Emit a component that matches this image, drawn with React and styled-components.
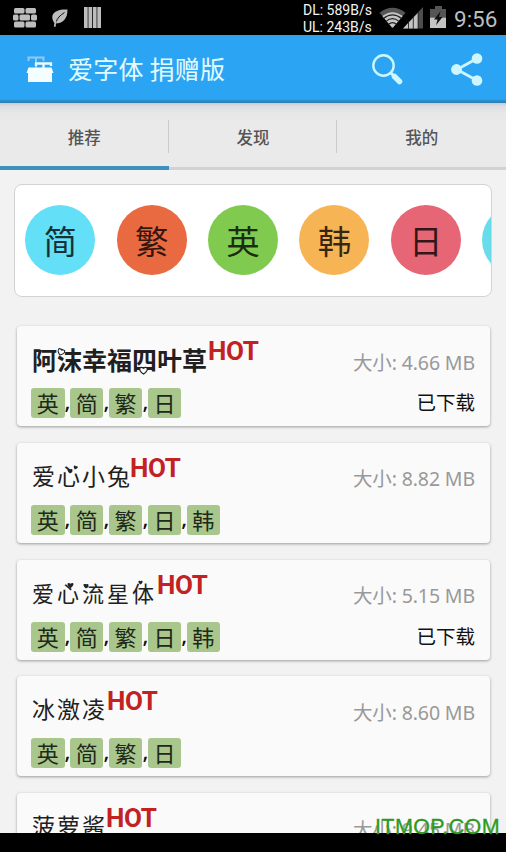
import React from 'react';
import styled, { createGlobalStyle } from 'styled-components';

const GlobalStyle = createGlobalStyle`
  *, *::before, *::after { box-sizing: border-box; }
  body { margin: 0; background: #000; }
`;

const cjk = '"Noto Sans CJK SC", sans-serif';

const Screen = styled.div`
  position: relative;
  width: 506px;
  height: 852px;
  display: flex;
  flex-direction: column;
  overflow: hidden;
  background: #f2f2f2;
  font-family: Roboto, ${cjk};
  white-space: nowrap;
`;

const StatusBar = styled.header`
  flex: none;
  height: 35px;
  display: flex;
  align-items: center;
  justify-content: space-between;
  padding: 0 8px 0 13px;
  background: #000;
  color: #bdbdbd;
`;

const StatusGroup = styled.div`
  display: flex;
  align-items: center;
  height: 35px;
  svg { display: block; }
`;

const NetSpeed = styled.div`
  width: 70px;
  margin-right: 6px;
  font-size: 14px;
  line-height: 17px;
  color: #f4f4f4;
  padding-top: 2px;
`;

const Clock = styled.div`
  width: 44px;
  margin-left: 8px;
  padding-top: 2px;
  font-size: 22.5px;
  line-height: 26px;
`;

const AppBar = styled.div`
  flex: none;
  height: 68px;
  display: flex;
  align-items: center;
  padding: 0 23px 0 26px;
  background: linear-gradient(#3a9de0, #2ba5f3 3px, #2ba5f3 64px, #2b89c4 66px, #2f80b0);
  svg { display: block; flex: none; }
`;

const AppTitle = styled.h1`
  flex: 1;
  margin: -2px 0 0 14px;
  font: 400 25px/34px ${cjk};
  color: #e4fcff;
  letter-spacing: 0.25px;
`;

const Actions = styled.div`
  display: flex;
  align-items: center;
  gap: 48px;
`;

const Tabs = styled.nav`
  flex: none;
  height: 67px;
  display: grid;
  grid-template-columns: repeat(3, 1fr);
  background: linear-gradient(#c5cad3, #dcdee2 3px, #e6e6e7 9px, #eaeaea 18px);
`;

const Tab = styled.div`
  position: relative;
  display: flex;
  justify-content: center;
  align-items: center;
  padding-top: ${p => (p.$active ? '4px' : '3px')};
  border-bottom: ${p => (p.$active ? '4px solid #3f8fbd' : '3px solid #d2d2d2')};
  font: 500 16.5px/24px ${cjk};
  color: #555;
  &:not(:last-child)::after {
    content: '';
    position: absolute;
    right: 0;
    top: 17px;
    width: 1px;
    height: 33px;
    background: #cbcbcb;
  }
`;

const Languages = styled.section`
  flex: none;
  height: 113px;
  margin: 14px 14px 0;
  padding: 0 0 2px 10.3px;
  display: flex;
  align-items: center;
  gap: 21.4px;
  overflow: hidden;
  border: 1px solid #d3d3d3;
  border-radius: 8px;
  background: #fff;
`;

const Bubble = styled.div`
  flex: none;
  width: 70px;
  height: 70px;
  border-radius: 50%;
  display: flex;
  align-items: center;
  justify-content: center;
  background: ${p => p.$color};
  color: rgba(0, 0, 0, 0.78);
  font: 400 33.5px/48px ${cjk};
`;

const FontList = styled.main`
  flex: 1;
  min-height: 0;
  overflow: hidden;
  padding: 29px 16.5px 0 16.5px;
  display: flex;
  flex-direction: column;
  gap: 16.8px;
`;

const Card = styled.article`
  flex: none;
  height: 100px;
  display: flex;
  justify-content: space-between;
  padding: 0 14.5px;
  border-radius: 4px;
  background: #fafafa;
  box-shadow: 0 1px 3px rgba(0, 0, 0, 0.36);
`;

const CardMain = styled.div`
  display: flex;
  flex-direction: column;
`;

const NameRow = styled.div`
  height: 62px;
  display: flex;
  align-items: flex-start;
`;

const FontName = styled.div`
  position: relative;
  width: ${p => p.$width}px;
  margin-top: ${p => p.$top}px;
  padding-left: 1px;
  font: ${p => p.$weight} ${p => p.$size}px/36px ${cjk};
  letter-spacing: ${p => 25 - p.$size}px;
  color: #202020;
`;

const Ornament = styled.svg`
  position: absolute;
  left: ${p => p.$x}px;
  top: ${p => p.$y}px;
  width: ${p => p.$size}px;
  height: ${p => p.$size}px;
  transform: rotate(${p => p.$turn}deg);
`;

const Hot = styled.span`
  margin-top: 10px;
  font: 700 26px/30px Roboto, sans-serif;
  letter-spacing: -0.4px;
  color: #c32222;
`;

const Tags = styled.div`
  display: flex;
  align-items: flex-start;
`;

const Tag = styled.span`
  width: 33.6px;
  height: 30px;
  border-radius: 3px;
  background: #a9c68c;
  color: #20281a;
  font: 400 22px/28px ${cjk};
  text-align: center;
`;

const Comma = styled.span`
  width: 5.3px;
  font: 500 22px/25px "Noto Sans", sans-serif;
  color: #111;
`;

const CardSide = styled.div`
  display: flex;
  flex-direction: column;
  align-items: flex-end;
`;

const Size = styled.div`
  height: 62px;
  padding-top: 22.5px;
  font: 400 19.5px/28px "Noto Sans", ${cjk};
  color: #999;
  letter-spacing: -0.12px;
`;

const Downloaded = styled.div`
  font: 400 19.5px/28px ${cjk};
  color: #111;
`;

const NavBar = styled.footer`
  flex: none;
  height: 19px;
  background: #000;
`;

const Watermark = styled.div`
  position: absolute;
  left: 375px;
  top: 815px;
  font: 400 21.5px/25px "Liberation Sans", sans-serif;
  letter-spacing: 0.4px;
  -webkit-text-stroke: 0.3px #2c9a20;
  color: #2c9a20;
`;

const BrickIcon = () => (
  <svg width="24" height="20" viewBox="0 0 24 20" fill="#bdbdbd">
    <rect x="1" y="0" width="10.5" height="5.5" rx="1.5" /><rect x="12.5" y="0" width="10.5" height="5.5" rx="1.5" />
    <rect x="0" y="6.5" width="5.5" height="6" rx="1.5" /><rect x="6.5" y="6.5" width="10.5" height="6" rx="1.5" /><rect x="18" y="6.5" width="6" height="6" rx="1.5" />
    <rect x="1" y="13.5" width="10.5" height="6" rx="1.5" /><rect x="12.5" y="13.5" width="10.5" height="6" rx="1.5" />
  </svg>
);

const LeafIcon = () => (
  <svg width="16" height="18" viewBox="0 0 16 18">
    <path d="M15.5 .5C9 0 2 1.5 .5 6.5 -.2 9.5 1 12.5 3 14.5 11 14.5 15.5 10 15.5 .5Z" fill="#bdbdbd" />
    <path d="M12.5 3.5C8 6.5 5 9 3.8 14" fill="none" stroke="#111" strokeWidth="1" />
    <path d="M4 12C3.2 14 2.8 15.5 2.8 17.8" fill="none" stroke="#bdbdbd" strokeWidth="1.7" />
  </svg>
);

const BarsIcon = () => (
  <svg width="17" height="21" viewBox="0 0 17 21" fill="#bdbdbd">
    <rect width="3.7" height="21" /><rect x="4.4" width="3.7" height="21" /><rect x="8.9" width="3.7" height="21" /><rect x="13.3" width="3.7" height="21" />
  </svg>
);

const SystemIcons = () => (
  <svg width="67" height="23" viewBox="0 0 67 24" preserveAspectRatio="none" fill="none">
    <path d="M.5 7Q13.5 -3.5 26.5 7L14 22.5H13Z" fill="#555" />
    <path d="M3.3 10.5Q13.5 2.5 23.7 10.5L14 22.5H13Z" fill="#c4c4c4" />
    <path d="M4.5 13Q13.5 5.5 22.5 13M7 16Q13.5 10.5 20 16M9.5 19Q13.5 15.5 17.5 19" stroke="#222" strokeWidth="1.2" />
    <path d="M24 23.5L44 1V23.5Z" fill="#4d4d4d" />
    <path d="M24 23.5L39 7V23.5Z" fill="#c4c4c4" />
    <path d="M29.5 16V24M34.3 11V24M39.1 5V24" stroke="#222" strokeWidth=".9" />
    <path d="M56 0H63V3H67V12H51V3H56Z" fill="#555" />
    <path d="M51 12H67V23H51Z" fill="#c4c4c4" />
    <path d="M61.5 5.5L55 14H58.5L57 20L63.5 11.5H60Z" fill="#111" />
  </svg>
);

const LogoIcon = () => (
  <svg width="28" height="28" viewBox="0 0 28 28" fill="none">
    <path d="M2.5 6V2.5H17.5V6M10 2.5V13" stroke="#8fc9f5" strokeWidth="2" />
    <path d="M10 11V8.5H25V11M17.5 8.5V15" stroke="#e9fbff" strokeWidth="2.3" />
    <path d="M2.5 12.5H25.5L27.5 18H26V27H2V18H.5Z" fill="#f4fdff" />
  </svg>
);

const SearchIcon = () => (
  <svg width="31" height="31" viewBox="0 0 31 31" fill="none" stroke="#cdf6ff">
    <circle cx="11.5" cy="11.5" r="10.2" strokeWidth="2.4" />
    <path d="M18.5 18.5L22 22" strokeWidth="3" />
    <path d="M22.5 22.5L27.5 27.5" strokeWidth="5.5" strokeLinecap="round" />
  </svg>
);

const ShareIcon = () => (
  <svg width="32" height="33" viewBox="0 0 32 33" fill="#cdf6ff">
    <path d="M26 5.5L6 16.5L26 27.5" fill="none" stroke="#cdf6ff" strokeWidth="2.8" />
    <circle cx="5.5" cy="16.5" r="5.4" /><circle cx="26" cy="5.5" r="5.3" /><circle cx="26" cy="27.5" r="5.3" />
  </svg>
);

const Heart = ({ x, y, size, turn = 0, outline }) => (
  <Ornament viewBox="0 0 10 10" $x={x} $y={y} $size={size} $turn={turn}>
    <path d="M5 9C-2 4 1-.5 5 2.5 9-.5 12 4 5 9Z" fill={outline ? '#fafafa' : '#222'} stroke="#222" strokeWidth={outline ? 1.3 : 0} />
  </Ornament>
);

const StatusLeft = styled(StatusGroup)`
  gap: 15px;
  svg:last-child { margin-left: 1px; }
`;

const languages = [
  ['简', '#63dff8'], ['繁', '#e96a40'], ['英', '#7fca4f'], ['韩', '#f6b455'], ['日', '#e66675'], ['', '#68dceb'],
];

const fonts = [
  { name: '阿沫幸福四叶草', weight: 700, size: 25, top: 15, width: 177, mb: '4.66', tags: '英简繁日', done: true,
    marks: [{ x: 26, y: 7, size: 8, outline: true, turn: 20 }, { x: 108, y: 25, size: 9, outline: true }] },
  { name: '爱心小兔', weight: 400, size: 23, top: 14, width: 99, mb: '8.82', tags: '英简繁日韩',
    marks: [{ x: 36, y: 11, size: 6 }, { x: 42, y: 8, size: 5, turn: 20 }] },
  { name: '爱心流星体', weight: 400, size: 22, top: 14, width: 126, mb: '5.15', tags: '英简繁日韩', done: true,
    marks: [{ x: 36, y: 8, size: 7 }, { x: 52, y: 9, size: 6 }, { x: 107, y: 6, size: 5 }] },
  { name: '冰激凌', weight: 400, size: 23, top: 14, width: 76, mb: '8.60', tags: '英简繁日', marks: [] },
  { name: '菠萝酱', weight: 400, size: 23, top: 14, width: 75, mb: '9.45', tags: '英简繁日', marks: [] },
];

function FontCard({ item }) {
  return (
    <Card>
      <CardMain>
        <NameRow>
          <FontName $weight={item.weight} $size={item.size} $width={item.width} $top={item.top}>
            {item.name}
            {item.marks.map((m, i) => <Heart key={i} {...m} />)}
          </FontName>
          <Hot>HOT</Hot>
        </NameRow>
        <Tags>
          {[...item.tags].map((t, i) => (
            <React.Fragment key={t}>{i > 0 && <Comma>,</Comma>}<Tag>{t}</Tag></React.Fragment>
          ))}
        </Tags>
      </CardMain>
      <CardSide>
        <Size>大小: {item.mb} MB</Size>
        {item.done && <Downloaded>已下载</Downloaded>}
      </CardSide>
    </Card>
  );
}

export default function App() {
  return (
    <Screen>
      <GlobalStyle />
      <StatusBar>
        <StatusLeft><BrickIcon /><LeafIcon /><BarsIcon /></StatusLeft>
        <StatusGroup>
          <NetSpeed>DL: 589B/s<br />UL: 243B/s</NetSpeed>
          <SystemIcons />
          <Clock>9:56</Clock>
        </StatusGroup>
      </StatusBar>
      <AppBar>
        <LogoIcon />
        <AppTitle>爱字体 捐赠版</AppTitle>
        <Actions><SearchIcon /><ShareIcon /></Actions>
      </AppBar>
      <Tabs><Tab $active>推荐</Tab><Tab>发现</Tab><Tab>我的</Tab></Tabs>
      <Languages>
        {languages.map(([label, color], i) => <Bubble key={i} $color={color}>{label}</Bubble>)}
      </Languages>
      <FontList>{fonts.map(item => <FontCard key={item.name} item={item} />)}</FontList>
      <NavBar />
      <Watermark>ITMOP.COM</Watermark>
    </Screen>
  );
}
